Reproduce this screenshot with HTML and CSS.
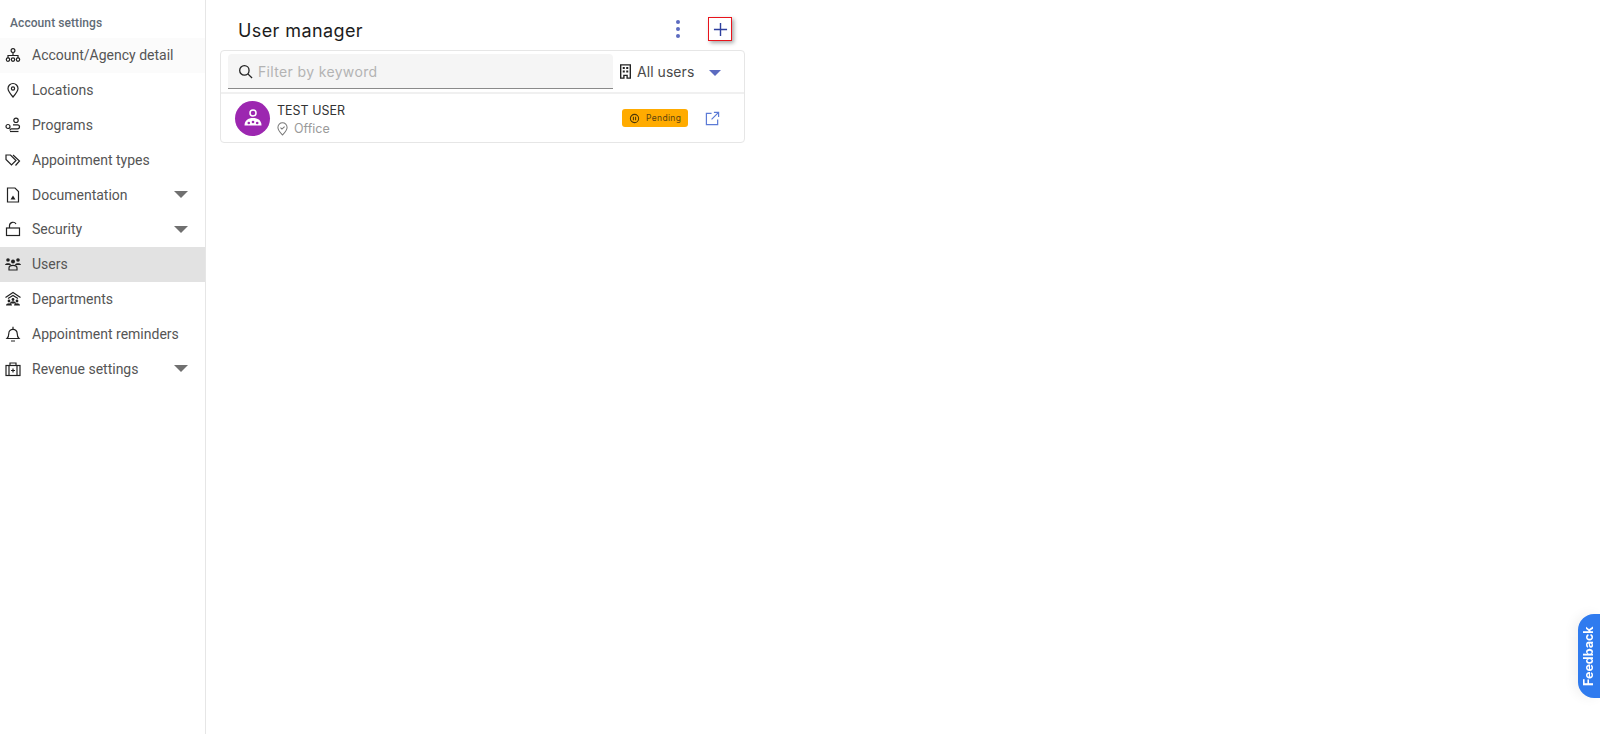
FILE: index.html
```html
<!DOCTYPE html>
<html lang="en">
<head>
  <meta charset="UTF-8">
  <meta name="viewport" content="width=device-width, initial-scale=1.0">
  <title>User manager</title>
  <link rel="stylesheet" href="styles.css">
</head>
<body>
  <div class="layout">
    <aside class="sidebar">
      <div class="sidebar-title">Account settings</div>
      <nav>
        <a class="nav-item nav-hover">
          <svg class="nav-icon" viewBox="0 0 16 16"><circle cx="8" cy="3.600" r="1.900"/><path d="M8 5.500v3M3 11V8.500h10V11"/><circle cx="3" cy="12.600" r="1.700"/><circle cx="8" cy="12.600" r="1.700"/><circle cx="13" cy="12.600" r="1.700"/></svg>
          <span class="nav-label">Account/Agency detail</span>
        </a>
        <a class="nav-item">
          <svg class="nav-icon" viewBox="0 0 16 16"><path d="M8 15C5 11.500 3 9 3 6.500a5 5 0 0 1 10 0C13 9 11 11.500 8 15z"/><circle cx="8" cy="6.500" r="1.600"/></svg>
          <span class="nav-label">Locations</span>
        </a>
        <a class="nav-item">
          <svg class="nav-icon" viewBox="0 0 16 16"><circle cx="11" cy="3.300" r="2.200"/><circle cx="3" cy="9.500" r="2"/><path d="M8 7.800h4.500a2 2 0 0 1 0 4H6.500a1.500 1.500 0 0 0-1.500 1.500v.2"/><path d="M5 14.500h8.500"/></svg>
          <span class="nav-label">Programs</span>
        </a>
        <a class="nav-item">
          <svg class="nav-icon" viewBox="0 0 16 16"><path d="M1 3v4.500l5.500 5.500 4.500-4.500L5.500 3z"/><path d="M8 3l6.500 6-4 4.500"/></svg>
          <span class="nav-label">Appointment types</span>
        </a>
        <a class="nav-item">
          <svg class="nav-icon" viewBox="0 0 16 16"><path d="M2.500 1h7.500l3.500 3.500V15h-11z"/><path d="M5.500 12.500l2.500-4 2.500 4z" class="solid"/></svg>
          <span class="nav-label">Documentation</span>
          <span class="caret"></span>
        </a>
        <a class="nav-item">
          <svg class="nav-icon" viewBox="0 0 16 16"><rect x="1.500" y="7" width="13" height="7.500"/><path d="M4.500 7V4.500a3.500 3.500 0 0 1 6.500-1.500"/></svg>
          <span class="nav-label">Security</span>
          <span class="caret"></span>
        </a>
        <a class="nav-item active">
          <svg class="nav-icon" viewBox="0 0 16 16"><g class="solid"><circle cx="3" cy="4" r="1.800"/><circle cx="13" cy="4" r="1.800"/><circle cx="8" cy="5.500" r="2"/><path d="M0 9c0-2.500 6-2.500 6 0zM10 9c0-2.500 6-2.500 6 0z"/></g><path d="M4 12c0-3.500 8-3.500 8 0v2H4z"/></svg>
          <span class="nav-label">Users</span>
        </a>
        <a class="nav-item">
          <svg class="nav-icon" viewBox="0 0 16 16"><path d="M.5 6.500L8 1.500l7.500 5M3 7.500L8 4.500l5 3"/><g class="solid"><circle cx="4" cy="10" r="1.400"/><circle cx="8" cy="8.500" r="1.400"/><circle cx="12" cy="10" r="1.400"/><path d="M1 14.500c0-3 6-3 6 0zM5 12.500c0-3 6-3 6 0zM9 14.500c0-3 6-3 6 0z"/></g></svg>
          <span class="nav-label">Departments</span>
        </a>
        <a class="nav-item">
          <svg class="nav-icon" viewBox="0 0 16 16"><path d="M2 12.500c1.500-1.500 1.800-3 1.800-5a4.200 4.200 0 0 1 8.400 0c0 2 .3 3.500 1.800 5z"/><path d="M8 .8v2.400M6 15h4"/></svg>
          <span class="nav-label">Appointment reminders</span>
        </a>
        <a class="nav-item">
          <svg class="nav-icon" viewBox="0 0 16 16"><rect x="1" y="4.500" width="14" height="10"/><path d="M5 4.500V2h6v2.500M4 4.500v10M12 4.500v10M8 7.500v4M6 9.500h4"/></svg>
          <span class="nav-label">Revenue settings</span>
          <span class="caret"></span>
        </a>
      </nav>
    </aside>

    <main class="content">
      <header class="page-header">
        <h1>User manager</h1>
        <div class="page-actions">
          <button class="more-btn" aria-label="More">
            <span></span><span></span><span></span>
          </button>
          <button class="add-btn" aria-label="Add user">
            <svg viewBox="0 0 16 16"><path d="M8 1v14M1 8h14"/></svg>
          </button>
        </div>
      </header>

      <section class="card">
        <div class="toolbar">
          <div class="search">
            <svg viewBox="0 0 16 16"><circle cx="6.800" cy="6.800" r="5"/><path d="M10.500 10.500L15 15"/></svg>
            <span class="placeholder">Filter by keyword</span>
          </div>
          <div class="filter">
            <svg viewBox="0 0 12 16"><path fill-rule="evenodd" d="M0 0h12v16H7v-3H5v3H0zM1.500 1.500v13H3.500v-3h5v3h2v-13zM3 3h2.200v2.200H3zM6.800 3H9v2.200H6.800zM3 7h2.200v2.200H3zM6.800 7H9v2.200H6.800z"/></svg>
            <span>All users</span>
            <span class="filter-caret"></span>
          </div>
        </div>
        <div class="user-row">
          <div class="avatar">
            <svg viewBox="0 0 20 20"><circle cx="10" cy="5" r="3"/><path d="M1.500 17.500c0-5 3.500-7.500 8.500-7.500s8.500 2.500 8.500 7.500z" class="fill"/><circle cx="5.800" cy="15" r="1.300" class="hole"/><circle cx="14.200" cy="15" r="1.300" class="hole"/><circle cx="10" cy="14" r="1.300" class="hole"/></svg>
          </div>
          <div class="user-info">
            <div class="user-name">TEST USER</div>
            <div class="user-place">
              <svg viewBox="0 0 12 15"><path d="M6 14C3 10.800 1 8.800 1 5.800a5 5 0 0 1 10 0c0 3-2 5-5 8.200z"/><path d="M3.800 6l1.600 1.600L8.300 4.800"/></svg>
              <span>Office</span>
            </div>
          </div>
          <span class="badge">
            <svg viewBox="0 0 12 12"><circle cx="6" cy="6" r="4.500"/><path d="M4.800 4.200v3.600M7.200 4.200v3.600"/></svg>
            Pending
          </span>
          <svg class="open-link" viewBox="0 0 16 16"><path d="M7 2.500H1.500v12h12V9M9.500 1.500h5v5M14.500 1.500L7 9"/></svg>
        </div>
      </section>
    </main>
  </div>

  <button class="feedback">Feedback</button>
</body>
</html>
```

FILE: styles.css
```css
* {
  box-sizing: border-box;
}
html, body {
  height: 100%;
}
body {
  margin: 0;
  background: white;
  font-family: Roboto, sans-serif;
  overflow: hidden;
}
.layout {
  display: flex;
  height: 734px;
}

/* sidebar */
.sidebar {
  width: 206px;
  flex-shrink: 0;
  border-right: 1px solid #e6e6e6;
  padding-top: 16px;
}
.sidebar-title {
  padding-left: 10px;
  font-size: 12px;
  font-weight: 500;
  line-height: 14px;
  color: #5f6b76;
  letter-spacing: 0.08px;
  margin-bottom: 8px;
}
.nav-item {
  display: flex;
  align-items: center;
  height: 34.9px;
  padding: 0 0 1px 5px;
  color: #555;
  font-size: 14px;
}
.nav-hover {
  background: #fbfbfb;
}
.nav-item.active {
  background: #e2e2e2;
}
.nav-icon {
  width: 16px;
  height: 16px;
  margin-right: 11px;
  flex-shrink: 0;
  fill: none;
  stroke: #222;
  stroke-width: 1.200;
}
.nav-icon .solid {
  fill: #222;
  stroke: none;
}
.nav-label {
  flex: 1;
}
.caret {
  width: 0;
  height: 0;
  margin-right: 17px;
  border-left: 7px solid transparent;
  border-right: 7px solid transparent;
  border-top: 7px solid #707070;
}

/* main */
.content {
  width: 538px;
  margin-left: 14px;
}
.page-header {
  display: flex;
  align-items: center;
  justify-content: space-between;
  height: 50px;
  padding: 10px 26px 0 18px;
}
h1 {
  margin: 0;
  font-family: Inter, sans-serif;
  font-size: 18px;
  font-weight: 400;
  letter-spacing: 0.4px;
  color: #1c1c1c;
}
.page-actions {
  display: flex;
  align-items: center;
  gap: 28px;
  margin-top: -2px;
}
.more-btn {
  display: flex;
  flex-direction: column;
  gap: 3px;
  padding: 0;
  border: none;
  background: none;
}
.more-btn span {
  width: 4px;
  height: 4px;
  border-radius: 50%;
  background: #5c6bc0;
}
.add-btn {
  display: flex;
  align-items: center;
  justify-content: center;
  width: 24px;
  height: 24px;
  padding: 0;
  background: white;
  border: 1.500px solid #e8141c;
  box-shadow: 2px 2px 4px rgba(0, 0, 0, 0.35);
}
.add-btn svg {
  width: 15px;
  height: 15px;
  fill: none;
  stroke: #2e3f9e;
  stroke-width: 1.500;
}

/* card */
.card {
  width: 525px;
  height: 93px;
  border: 1px solid #e6e6e6;
  border-radius: 4px;
}
.toolbar {
  display: flex;
  height: 43px;
  padding: 3px 0 0 7px;
  border-bottom: 2px solid #f0f0f0;
}
.search {
  display: flex;
  align-items: center;
  width: 385px;
  height: 35px;
  padding-left: 10px;
  background: #f5f5f5;
  border-bottom: 1px solid #8a8a8a;
  border-radius: 4px 4px 0 0;
}
.search svg {
  width: 15px;
  height: 15px;
  margin-right: 5px;
  fill: none;
  stroke: #222;
  stroke-width: 1.400;
}
.placeholder {
  font-family: Inter, sans-serif;
  font-size: 14px;
  letter-spacing: 0.35px;
  color: #b3b3b3;
}
.filter {
  display: flex;
  align-items: center;
  flex: 1;
  height: 35px;
  padding-left: 7px;
  font-family: Inter, sans-serif;
  font-size: 14px;
  letter-spacing: 0.05px;
  color: #4a4a4a;
}
.filter svg {
  width: 11px;
  height: 15px;
  margin-right: 6px;
  fill: #222;
}
.filter-caret {
  width: 0;
  height: 0;
  margin-left: 15px;
  margin-top: 2px;
  border-left: 6px solid transparent;
  border-right: 6px solid transparent;
  border-top: 6px solid #5c6bc0;
}
.user-row {
  display: flex;
  align-items: center;
  height: 48px;
  padding-left: 14px;
}
.avatar {
  display: flex;
  align-items: center;
  justify-content: center;
  width: 35px;
  height: 35px;
  border-radius: 50%;
  background: #9c27b0;
  margin-right: 7px;
}
.avatar svg {
  width: 20px;
  height: 20px;
  fill: none;
  stroke: white;
  stroke-width: 1.500;
}
.avatar .fill {
  fill: white;
  stroke: none;
}
.avatar .hole {
  fill: #9c27b0;
  stroke: none;
}
.user-info {
  flex: 1;
  padding-top: 3px;
}
.user-name {
  font-family: Inter, sans-serif;
  font-size: 12.500px;
  line-height: 18px;
  color: #333;
}
.user-place {
  display: flex;
  align-items: center;
  font-family: Inter, sans-serif;
  font-size: 12.500px;
  line-height: 18px;
  color: #9a9a9a;
}
.user-place svg {
  width: 11px;
  height: 14px;
  margin-right: 6px;
  fill: none;
  stroke: #777;
  stroke-width: 1.100;
}
.badge {
  display: flex;
  align-items: center;
  width: 66px;
  height: 18px;
  padding-left: 7px;
  border-radius: 3px;
  background: #ffab00;
  font-family: Inter, sans-serif;
  font-size: 8.500px;
  letter-spacing: 0.35px;
  color: #5a4310;
}
.badge svg {
  width: 11px;
  height: 11px;
  margin-right: 6px;
  fill: none;
  stroke: #4a3608;
  stroke-width: 1.100;
}
.open-link {
  width: 15px;
  height: 15px;
  margin: 0 24px 0 17px;
  fill: none;
  stroke: #5c7bd6;
  stroke-width: 1.300;
}

/* feedback tab */
.feedback {
  position: fixed;
  right: 0;
  top: 614px;
  width: 22px;
  height: 84px;
  padding: 0;
  border: none;
  border-radius: 0 16px 16px 0;
  background: #2f7bef;
  color: white;
  font-family: Inter, sans-serif;
  font-size: 12.500px;
  font-weight: 700;
  writing-mode: vertical-rl;
  transform: rotate(180deg);
  box-shadow: 4px 0 12px rgba(0, 0, 0, 0.06);
}
```
